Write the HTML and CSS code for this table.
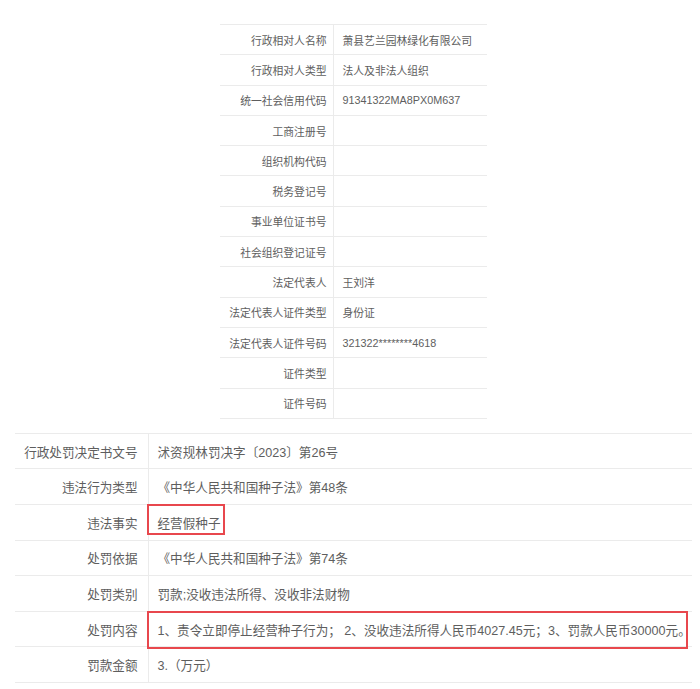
FILE: index.html
```
<!DOCTYPE html>
<html lang="zh-CN">
<head>
  <meta charset="UTF-8" />
  <title>行政处罚信息</title>
  <link rel="stylesheet" href="styles.css">
</head>
<body>

  <table class="info">
    <tr><td class="label">行政相对人名称</td><td>萧县艺兰园林绿化有限公司</td></tr>
    <tr><td class="label">行政相对人类型</td><td>法人及非法人组织</td></tr>
    <tr><td class="label">统一社会信用代码</td><td>91341322MA8PX0M637</td></tr>
    <tr><td class="label">工商注册号</td><td></td></tr>
    <tr><td class="label">组织机构代码</td><td></td></tr>
    <tr><td class="label">税务登记号</td><td></td></tr>
    <tr><td class="label">事业单位证书号</td><td></td></tr>
    <tr><td class="label">社会组织登记证号</td><td></td></tr>
    <tr><td class="label">法定代表人</td><td>王刘洋</td></tr>
    <tr><td class="label">法定代表人证件类型</td><td>身份证</td></tr>
    <tr><td class="label">法定代表人证件号码</td><td>321322********4618</td></tr>
    <tr><td class="label">证件类型</td><td></td></tr>
    <tr><td class="label">证件号码</td><td></td></tr>
  </table>

  <table class="penalty">
    <tr><td class="label">行政处罚决定书文号</td><td>沭资规林罚决字〔2023〕第26号</td></tr>
    <tr><td class="label">违法行为类型</td><td>《中华人民共和国种子法》第48条</td></tr>
    <tr><td class="label">违法事实</td><td class="mark-short">经营假种子</td></tr>
    <tr><td class="label">处罚依据</td><td>《中华人民共和国种子法》第74条</td></tr>
    <tr><td class="label">处罚类别</td><td>罚款;没收违法所得、没收非法财物</td></tr>
    <tr><td class="label">处罚内容</td><td class="mark-full">1、责令立即停止经营种子行为； 2、没收违法所得人民币4027.45元；3、罚款人民币30000元。</td></tr>
    <tr><td class="label">罚款金额</td><td>3.（万元）</td></tr>
  </table>

</body>
</html>
```

FILE: styles.css
```
body {
  margin: 0;
  padding: 24px 0 0;
  font-family: "Liberation Sans", "Noto Sans CJK SC", sans-serif;
  color: #5e5e5e;
  background: #fff;
}

table {
  border-collapse: collapse;
  border-top: 1px solid #ebebeb;
}

td {
  border-bottom: 1px solid #ebebeb;
  padding: 0;
  white-space: nowrap;
  vertical-align: middle;
}

td.label {
  text-align: right;
  border-right: 1px solid #ebebeb;
}

/* upper block: subject info */
.info {
  margin-left: 220px;
  width: 267px;
  font-size: 10.8px;
}

.info td {
  height: 29.3px;
  padding-left: 9px;
}

.info td.label {
  width: 113px;
  padding: 0 6px 0 0;
  box-sizing: border-box;
}

/* lower block: decision */
.penalty {
  margin: 14px 0 0 15px;
  width: 677px;
  font-size: 12.6px;
}

.penalty td {
  height: 34.6px;
  padding-left: 9px;
  position: relative;
}

.penalty td.label {
  width: 133px;
  padding: 0 10px 0 0;
  box-sizing: border-box;
}

/* red annotation boxes */
.mark-short::after,
.mark-full::after {
  content: "";
  position: absolute;
  border: 2px solid #e8474d;
  box-sizing: border-box;
  pointer-events: none;
}

.mark-short::after {
  left: -2px;
  top: -1px;
  width: 78px;
  height: 31px;
}

.mark-full::after {
  left: -2px;
  top: -1px;
  right: 4px;
  height: 38px;
}
```
